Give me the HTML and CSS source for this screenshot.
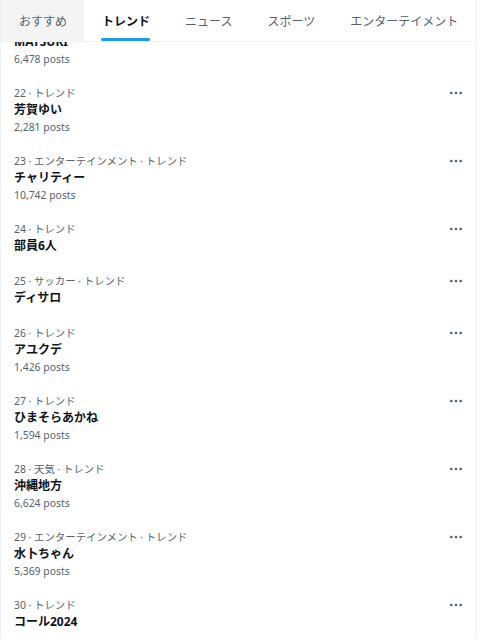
FILE: index.html
```html
<!DOCTYPE html>
<html lang="ja">
<head>
  <meta charset="UTF-8" />
  <meta name="viewport" content="width=device-width, initial-scale=1.0" />
  <title>トレンド</title>
  <link rel="stylesheet" href="styles.css">
</head>
<body>
  <main class="column">
    <nav class="tabs">
      <a class="tab tab-hover" href="#"><span class="tab-label">おすすめ</span></a>
      <a class="tab active" href="#"><span class="tab-label">トレンド</span></a>
      <a class="tab" href="#"><span class="tab-label">ニュース</span></a>
      <a class="tab" href="#"><span class="tab-label">スポーツ</span></a>
      <a class="tab" href="#"><span class="tab-label">エンターテイメント</span></a>
    </nav>

    <ul class="trends">
      <li class="trend">
        <div class="trend-body">
          <div class="trend-meta">21 · トレンド</div>
          <div class="trend-name">MATSURI</div>
          <div class="trend-count">6,478 posts</div>
        </div>
        <button class="more" aria-label="その他"><svg viewBox="0 0 24 24"><path d="M3 12c0-1.1.9-2 2-2s2 .9 2 2-.9 2-2 2-2-.9-2-2zm9 2c1.1 0 2-.9 2-2s-.9-2-2-2-2 .9-2 2 .9 2 2 2zm7 0c1.1 0 2-.9 2-2s-.9-2-2-2-2 .9-2 2 .9 2 2 2z"/></svg></button>
      </li>
      <li class="trend">
        <div class="trend-body">
          <div class="trend-meta">22 · トレンド</div>
          <div class="trend-name">芳賀ゆい</div>
          <div class="trend-count">2,281 posts</div>
        </div>
        <button class="more" aria-label="その他"><svg viewBox="0 0 24 24"><path d="M3 12c0-1.1.9-2 2-2s2 .9 2 2-.9 2-2 2-2-.9-2-2zm9 2c1.1 0 2-.9 2-2s-.9-2-2-2-2 .9-2 2 .9 2 2 2zm7 0c1.1 0 2-.9 2-2s-.9-2-2-2-2 .9-2 2 .9 2 2 2z"/></svg></button>
      </li>
      <li class="trend">
        <div class="trend-body">
          <div class="trend-meta">23 · エンターテインメント · トレンド</div>
          <div class="trend-name">チャリティー</div>
          <div class="trend-count">10,742 posts</div>
        </div>
        <button class="more" aria-label="その他"><svg viewBox="0 0 24 24"><path d="M3 12c0-1.1.9-2 2-2s2 .9 2 2-.9 2-2 2-2-.9-2-2zm9 2c1.1 0 2-.9 2-2s-.9-2-2-2-2 .9-2 2 .9 2 2 2zm7 0c1.1 0 2-.9 2-2s-.9-2-2-2-2 .9-2 2 .9 2 2 2z"/></svg></button>
      </li>
      <li class="trend">
        <div class="trend-body">
          <div class="trend-meta">24 · トレンド</div>
          <div class="trend-name">部員6人</div>
        </div>
        <button class="more" aria-label="その他"><svg viewBox="0 0 24 24"><path d="M3 12c0-1.1.9-2 2-2s2 .9 2 2-.9 2-2 2-2-.9-2-2zm9 2c1.1 0 2-.9 2-2s-.9-2-2-2-2 .9-2 2 .9 2 2 2zm7 0c1.1 0 2-.9 2-2s-.9-2-2-2-2 .9-2 2 .9 2 2 2z"/></svg></button>
      </li>
      <li class="trend">
        <div class="trend-body">
          <div class="trend-meta">25 · サッカー · トレンド</div>
          <div class="trend-name">ディサロ</div>
        </div>
        <button class="more" aria-label="その他"><svg viewBox="0 0 24 24"><path d="M3 12c0-1.1.9-2 2-2s2 .9 2 2-.9 2-2 2-2-.9-2-2zm9 2c1.1 0 2-.9 2-2s-.9-2-2-2-2 .9-2 2 .9 2 2 2zm7 0c1.1 0 2-.9 2-2s-.9-2-2-2-2 .9-2 2 .9 2 2 2z"/></svg></button>
      </li>
      <li class="trend">
        <div class="trend-body">
          <div class="trend-meta">26 · トレンド</div>
          <div class="trend-name">アユクデ</div>
          <div class="trend-count">1,426 posts</div>
        </div>
        <button class="more" aria-label="その他"><svg viewBox="0 0 24 24"><path d="M3 12c0-1.1.9-2 2-2s2 .9 2 2-.9 2-2 2-2-.9-2-2zm9 2c1.1 0 2-.9 2-2s-.9-2-2-2-2 .9-2 2 .9 2 2 2zm7 0c1.1 0 2-.9 2-2s-.9-2-2-2-2 .9-2 2 .9 2 2 2z"/></svg></button>
      </li>
      <li class="trend">
        <div class="trend-body">
          <div class="trend-meta">27 · トレンド</div>
          <div class="trend-name">ひまそらあかね</div>
          <div class="trend-count">1,594 posts</div>
        </div>
        <button class="more" aria-label="その他"><svg viewBox="0 0 24 24"><path d="M3 12c0-1.1.9-2 2-2s2 .9 2 2-.9 2-2 2-2-.9-2-2zm9 2c1.1 0 2-.9 2-2s-.9-2-2-2-2 .9-2 2 .9 2 2 2zm7 0c1.1 0 2-.9 2-2s-.9-2-2-2-2 .9-2 2 .9 2 2 2z"/></svg></button>
      </li>
      <li class="trend">
        <div class="trend-body">
          <div class="trend-meta">28 · 天気 · トレンド</div>
          <div class="trend-name">沖縄地方</div>
          <div class="trend-count">6,624 posts</div>
        </div>
        <button class="more" aria-label="その他"><svg viewBox="0 0 24 24"><path d="M3 12c0-1.1.9-2 2-2s2 .9 2 2-.9 2-2 2-2-.9-2-2zm9 2c1.1 0 2-.9 2-2s-.9-2-2-2-2 .9-2 2 .9 2 2 2zm7 0c1.1 0 2-.9 2-2s-.9-2-2-2-2 .9-2 2 .9 2 2 2z"/></svg></button>
      </li>
      <li class="trend">
        <div class="trend-body">
          <div class="trend-meta">29 · エンターテインメント · トレンド</div>
          <div class="trend-name">水卜ちゃん</div>
          <div class="trend-count">5,369 posts</div>
        </div>
        <button class="more" aria-label="その他"><svg viewBox="0 0 24 24"><path d="M3 12c0-1.1.9-2 2-2s2 .9 2 2-.9 2-2 2-2-.9-2-2zm9 2c1.1 0 2-.9 2-2s-.9-2-2-2-2 .9-2 2 .9 2 2 2zm7 0c1.1 0 2-.9 2-2s-.9-2-2-2-2 .9-2 2 .9 2 2 2z"/></svg></button>
      </li>
      <li class="trend">
        <div class="trend-body">
          <div class="trend-meta">30 · トレンド</div>
          <div class="trend-name">コール2024</div>
        </div>
        <button class="more" aria-label="その他"><svg viewBox="0 0 24 24"><path d="M3 12c0-1.1.9-2 2-2s2 .9 2 2-.9 2-2 2-2-.9-2-2zm9 2c1.1 0 2-.9 2-2s-.9-2-2-2-2 .9-2 2 .9 2 2 2zm7 0c1.1 0 2-.9 2-2s-.9-2-2-2-2 .9-2 2 .9 2 2 2z"/></svg></button>
      </li>
    </ul>
  </main>
</body>
</html>
```

FILE: styles.css
```css
html, body {
  height: 100%;
}
body {
  margin: 0;
  overflow: hidden;
  background: #fff;
  color: #0f1419;
  font-family: "Noto Sans", "Noto Sans CJK JP", sans-serif;
}
.column {
  width: 475px;
  min-height: 100%;
  border-left: 1px solid #eff3f4;
  border-right: 1px solid #eff3f4;
}
.tabs {
  position: sticky;
  top: 0;
  z-index: 1;
  display: flex;
  height: 41px;
  background: #fff;
  border-bottom: 1px solid #eff3f4;
}
.tab {
  display: flex;
  justify-content: center;
  padding: 0 17px 0 18px;
  color: #536471;
  font-size: 12px;
  text-decoration: none;
}
.tab-hover {
  background: #f4f4f4;
}
.tab-label {
  display: flex;
  align-items: center;
  position: relative;
  white-space: nowrap;
}
.tab.active {
  color: #0f1419;
  font-weight: 700;
}
.tab.active .tab-label::after {
  content: "";
  position: absolute;
  left: -1px;
  right: 0;
  bottom: 0;
  height: 3px;
  border-radius: 2px;
  background: #1d9bf0;
}
.trends {
  list-style: none;
  margin: -33px 0 0;
  padding: 0;
}
.trend {
  display: flex;
  align-items: flex-start;
  padding: 8px 12px 10px 13px;
}
.trend-body {
  flex: 1;
  min-width: 0;
}
.trend-meta,
.trend-count {
  color: #536471;
  font-size: 10.4px;
  line-height: 16px;
}
.trend-name {
  font-size: 12px;
  font-weight: 700;
  line-height: 18px;
}
.more {
  width: 16px;
  height: 16px;
  padding: 0;
  border: none;
  background: none;
  cursor: pointer;
}
.more svg {
  display: block;
  width: 16px;
  height: 16px;
  fill: #536471;
}
```
